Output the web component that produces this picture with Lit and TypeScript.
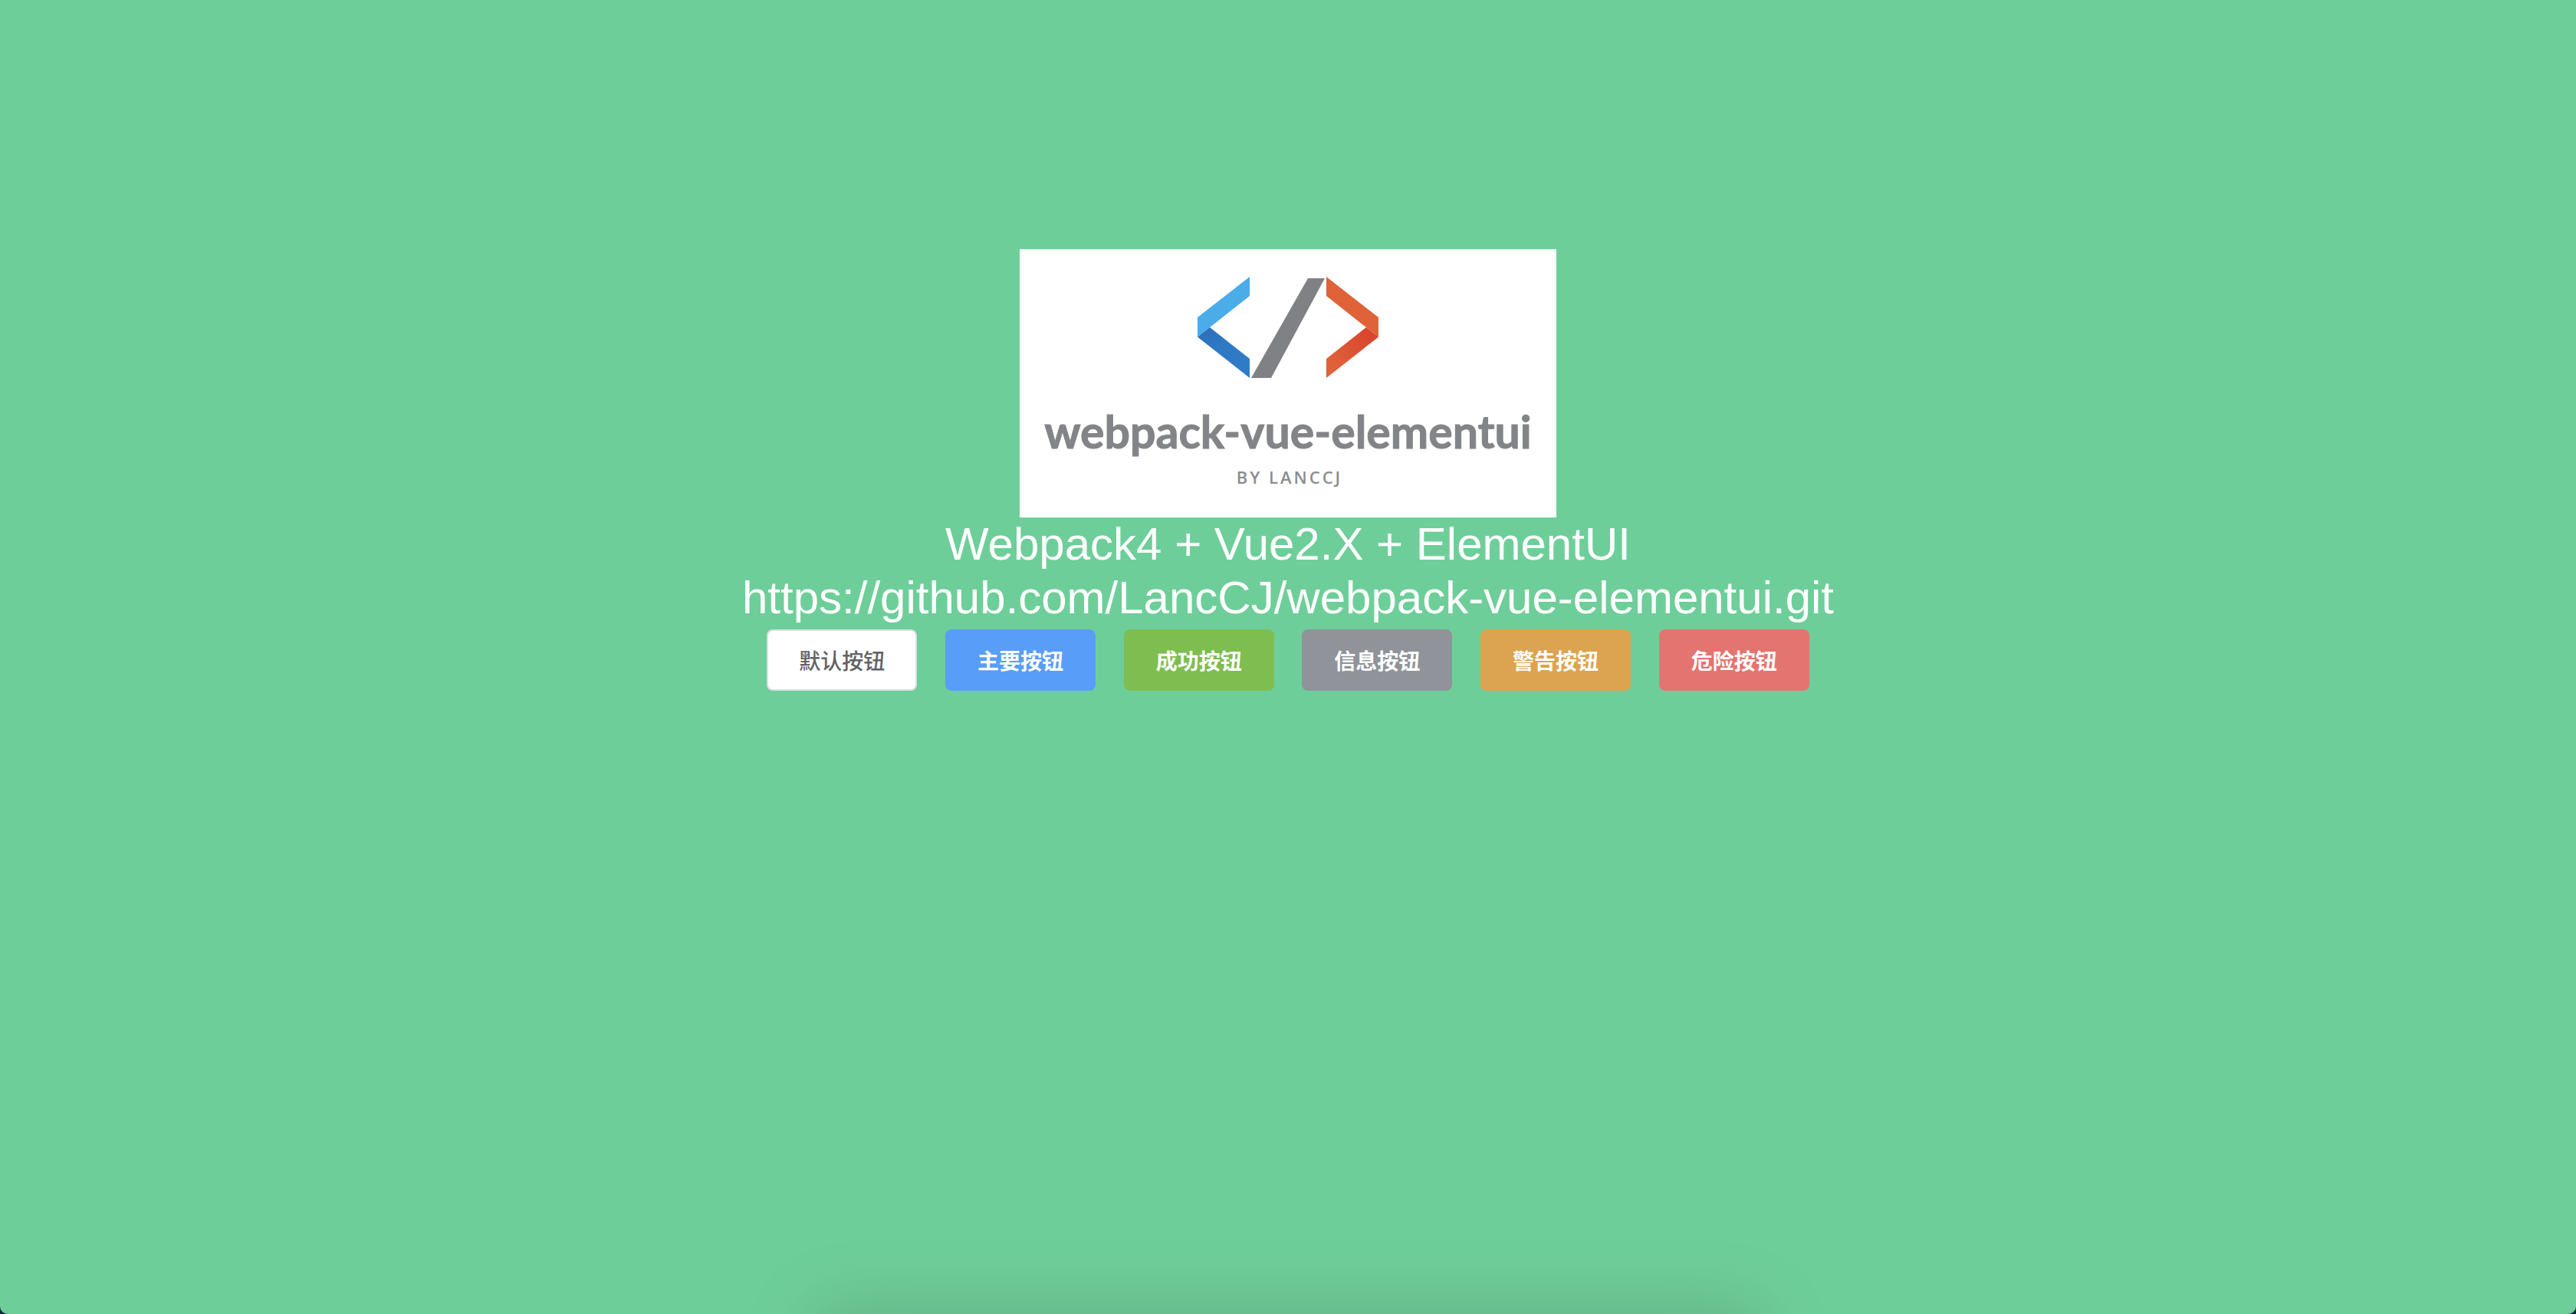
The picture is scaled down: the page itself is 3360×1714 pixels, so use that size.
import { LitElement, html, css } from "lit";
import { customElement } from "lit/decorators.js";

interface ActionButton {
  kind: string;
  label: string;
}

const BUTTONS: ActionButton[] = [
  { kind: "default", label: "默认按钮" },
  { kind: "primary", label: "主要按钮" },
  { kind: "success", label: "成功按钮" },
  { kind: "info", label: "信息按钮" },
  { kind: "warning", label: "警告按钮" },
  { kind: "danger", label: "危险按钮" },
];

@customElement("project-logo")
export class ProjectLogo extends LitElement {
  static styles = css`
    :host {
      display: block;
      background: #ffffff;
    }
    .art {
      display: block;
      width: 100%;
      height: auto;
    }
    .name {
      font: 700 59px "Lato", "Open Sans", sans-serif;
      fill: #838488;
      stroke: #838488;
      stroke-width: 1px;
    }
    .author {
      font: 600 22px "Open Sans", sans-serif;
      letter-spacing: 3px;
      fill: #8c8d90;
    }
  `;

  render() {
    return html`
      <svg class="art" viewBox="0 0 700 350" role="img" aria-label="webpack-vue-elementui by LancCJ">
        <defs>
          <linearGradient id="blue-fold" x1="0" y1="0" x2="1" y2="1">
            <stop offset="0" stop-color="#2b6cb4" />
            <stop offset="0.4" stop-color="#3079c4" />
            <stop offset="1" stop-color="#307cc6" />
          </linearGradient>
          <linearGradient id="red-fold" x1="1" y1="0" x2="0" y2="1">
            <stop offset="0.1" stop-color="#d9432d" />
            <stop offset="0.75" stop-color="#df6039" />
          </linearGradient>
        </defs>
        <polygon points="300,36 300,61 248,102 232,114.5 232,89" fill="#4aace9" />
        <polygon points="248,102 300,143 300,168 232,114.5" fill="url(#blue-fold)" />
        <polygon points="376,38 398,38 328,168 302,168" fill="#808184" />
        <polygon points="400,36 400,61 452,102 468,114.5 468,89" fill="#df6239" />
        <polygon points="452,102 400,143 400,168 468,114.5" fill="url(#red-fold)" />
        <text class="name" x="350" y="260" text-anchor="middle">webpack-vue-elementui</text>
        <text class="author" x="352" y="306" text-anchor="middle">BY LANCCJ</text>
      </svg>
    `;
  }
}

@customElement("app-root")
export class AppRoot extends LitElement {
  static styles = css`
    :host {
      display: block;
      background: #0b2b3b;
    }
    .page {
      position: relative;
      box-sizing: border-box;
      min-height: 100vh;
      padding-top: 325px;
      overflow: hidden;
      border-radius: 0 0 10px 10px;
      background: #6ece99;
      color: #ffffff;
      font: 60px/70px "Liberation Sans", "Noto Sans CJK SC", sans-serif;
      text-align: center;
    }
    .logo {
      width: 700px;
      max-width: 100%;
      margin: 0 auto;
    }
    .line {
      margin: 0;
      font: inherit;
    }
    .link {
      color: inherit;
      text-decoration: none;
    }
    .actions {
      padding-top: 6px;
    }
    .button {
      box-sizing: border-box;
      height: 80px;
      padding: 0 40px;
      border: 2px solid transparent;
      border-radius: 8px;
      color: #ffffff;
      font: 600 28px/28px "Noto Sans CJK SC", sans-serif;
      vertical-align: top;
      cursor: pointer;
    }
    .button + .button {
      margin-left: 20px;
    }
    .default {
      border-color: #dcdfe6;
      background: #ffffff;
      color: #606266;
      font-weight: 500;
    }
    .primary {
      border-color: #589ef8;
      background: #589ef8;
    }
    .success {
      border-color: #7ebe50;
      background: #7ebe50;
    }
    .info {
      border-color: #909399;
      background: #909399;
    }
    .warning {
      border-color: #dca450;
      background: #dca450;
    }
    .danger {
      border-color: #e47470;
      background: #e47470;
    }
    .shade {
      position: absolute;
      top: 100%;
      left: 32%;
      right: 32%;
      height: 80px;
      border-radius: 40px;
      box-shadow: 0 10px 80px 20px rgba(84, 130, 100, 0.35);
      pointer-events: none;
    }
  `;

  render() {
    return html`
      <main class="page">
        <project-logo class="logo"></project-logo>
        <h1 class="line">Webpack4 + Vue2.X + ElementUI</h1>
        <p class="line">
          <a class="link" href="https://github.com/LancCJ/webpack-vue-elementui.git"
            >https://github.com/LancCJ/webpack-vue-elementui.git</a
          >
        </p>
        <div class="actions">
          ${BUTTONS.map(
            (b) => html`<button class="button ${b.kind}" type="button">${b.label}</button> `
          )}
        </div>
        <div class="shade"></div>
      </main>
    `;
  }
}
